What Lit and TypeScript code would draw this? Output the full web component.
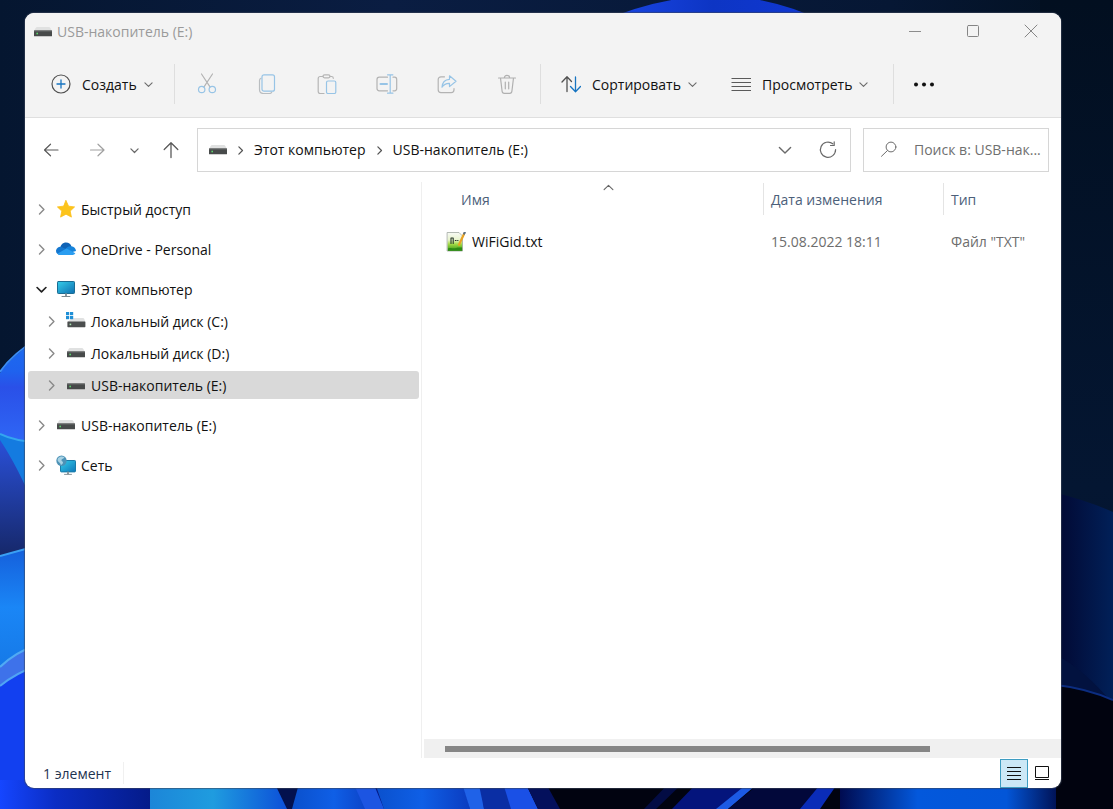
import { LitElement, html, css, svg } from "lit";
import { customElement, state } from "lit/decorators.js";
import { classMap } from "lit/directives/class-map.js";

const GREY = "#6a6a6a";

/* ---------- glyphs ---------- */

const chevron = (dir: "down" | "right" | "up", size: number, color: string, width = 1.2) => {
  const d = { down: "M1 3.2 5 7.2 9 3.2", right: "M3.2 1 7.2 5 3.2 9", up: "M1 7 5 3 9 7" }[dir];
  return html`<svg class="glyph" width=${size} height=${size} viewBox="0 0 10 10" fill="none" aria-hidden="true">
    <path d=${d} stroke=${color} stroke-width=${width} stroke-linecap="round" stroke-linejoin="round" />
  </svg>`;
};

const glyph = (content: unknown, w = 20, h = 20) => html`<svg
  class="glyph" width=${w} height=${h} viewBox="0 0 ${w} ${h}" fill="none"
  stroke-linecap="round" stroke-linejoin="round" aria-hidden="true">${content}</svg>`;

const driveShape = svg`
  <path d="M3 3h12q.8 0 1.200.8L18 7H0l1.800-3.200Q2.200 3 3 3z" fill="#e0e1e1"/>
  <rect x="0" y="6.500" width="18" height="5.800" rx=".6" fill="#474a4a"/>
  <rect x="0" y="6.500" width="18" height="1" fill="#686b6b"/>
  <rect x="2.400" y="8.700" width="1.600" height="1.600" fill="#5bd46c"/>`;

const icons = {
  drive: glyph(driveShape, 18, 16),
  driveC: glyph(svg`
    <path d="M8 6h9q.8 0 1.200.8L19.400 10H1.400L5 7z" fill="#e0e1e1"/>
    <rect x="0" y="0" width="3.200" height="3.200" fill="#1f8fd6"/><rect x="4" y="0" width="3.200" height="3.200" fill="#1f8fd6"/>
    <rect x="0" y="4" width="3.200" height="3.200" fill="#1f8fd6"/><rect x="4" y="4" width="3.200" height="3.200" fill="#1f8fd6"/>
    <rect x="1.400" y="9.400" width="18" height="5.800" rx=".6" fill="#4b4e4e"/>
    <rect x="3.600" y="11.600" width="1.600" height="1.600" fill="#a9e4b0"/>`, 20, 18),
  star: glyph(svg`<path d="M10 1.600l2.600 5.600 6 .7-4.400 4.200 1.200 6L10 15.200l-5.400 2.900 1.200-6L1.400 7.900l6-.7z"
    fill="#fcc41c" stroke="#fcbf18" stroke-width=".8"/>`),
  cloud: glyph(svg`
    <path d="M4.300 8.500C4.700 5.500 7 3.400 10 3.400c2.700 0 4.700 1.600 5.500 4l-6 5z" fill="#0f62b5"/>
    <path d="M4.200 16A4.100 4.100 0 1 1 5.400 8l8 3.500-2 4.500z" fill="#1477cf"/>
    <path d="M9 10.500c1.200-2.300 3.600-3.700 6.300-3.300 2.800.4 4.500 2.300 4.700 4.800L13 14z" fill="#1583db"/>
    <path d="M1.300 14.800 9.600 10c.6-.3 1.300-.3 1.900 0l7.900 4.300A3.700 3.700 0 0 1 16.600 16H4.200c-1.200 0-2.200-.4-2.900-1.200z" fill="#2a9df0"/>`),
  monitor: glyph(svg`
    <defs><linearGradient id="scr" x1="0" y1="0" x2="1" y2="1">
      <stop offset="0" stop-color="#35cdea"/><stop offset="1" stop-color="#0e6fb0"/></linearGradient></defs>
    <rect x="1.500" y="2.500" width="17" height="12" rx=".8" fill="url(#scr)" stroke="#1a6c92"/>
    <path d="M10 15.200v1.600" stroke="#8a969c" stroke-width="2"/><path d="M6 17.500h8" stroke="#7d898f"/>`),
  network: glyph(svg`
    <defs><linearGradient id="net" x1="0" y1="0" x2="1" y2="1">
      <stop offset="0" stop-color="#35cdea"/><stop offset="1" stop-color="#0e78ba"/></linearGradient></defs>
    <rect x="4.500" y="5.500" width="15" height="11.400" rx=".8" fill="url(#net)" stroke="#1a7ba8"/>
    <path d="M12 17.400v1.400" stroke="#8a969c" stroke-width="2"/><path d="M8.500 19.400h7" stroke="#8a969c"/>
    <circle cx="5.500" cy="5.800" r="5.200" fill="#4d92b6"/>
    <path d="M2 3.200c2-2.200 5-2.200 6.500-.8-1 1.600-2.600 1-3 2.400-.5 1.500 1.600 1.200 1.500 3-.1 1-1.200 1.700-2 2.400-.5-1.500-1-2.400-2.200-3.200S1.200 4.700 2 3.200z" fill="#a8d2e4"/>`),
  file: glyph(svg`
    <defs><linearGradient id="grn" x1="0" y1="0" x2="0" y2="1">
      <stop offset="0" stop-color="#f8faf6"/><stop offset=".4" stop-color="#e8f4cc"/><stop offset=".62" stop-color="#a6dc48"/><stop offset="1" stop-color="#2f9412"/></linearGradient></defs>
    <path d="M1.500.5h11.500l3.500 3.500v15H1.500z" fill="url(#grn)" stroke="#a2aaa2" stroke-width=".8"/>
    <path d="M2 16.500c3-1.500 5 .5 8-.5s4-.5 6.100-.5v3.200H2z" fill="#2d8b14"/>
    <path d="M5 6v5.500M7.200 6v5.500M5 6h2.200M9.300 8.500h.8M11.600 8.500h.4" stroke="#26352a" stroke-width="1.100"/>
    <path d="M18 2 13 12.800" stroke="#e8a224" stroke-width="2.200"/>
    <path d="M18.200 1.500l.5-.9" stroke="#5d7080" stroke-width="2.200"/>`),
  add: glyph(svg`<circle cx="10" cy="10" r="9" stroke="#505050" stroke-width="1.200"/>
    <path d="M10 6v8M6 10h8" stroke="#1674c1" stroke-width="1.300"/>`),
  cut: glyph(svg`<path d="M4.500 1 13 13.800M15.500 1 7 13.800" stroke="#b3b3b3" stroke-width="1.200"/>
    <circle cx="4.700" cy="16.500" r="3.200" stroke="#97c4e6" stroke-width="1.200"/>
    <circle cx="15.300" cy="16.500" r="3.200" stroke="#97c4e6" stroke-width="1.200"/>`, 20, 22),
  copy: glyph(svg`<path d="M4 4.200c-1 .4-1.500 1.200-1.500 2.200v9.200c0 2.400 1.400 3.900 3.800 3.900h6.200c1 0 1.800-.5 2.200-1.300" stroke="#b9bdc0" stroke-width="1.200"/>
    <rect x="5" y=".8" width="12.500" height="16.400" rx="2" stroke="#97c4e6" stroke-width="1.200"/>`),
  paste: glyph(svg`<path d="M6 2.500H3.200C2 2.500 1.200 3.300 1.200 4.500V17.500c0 1.200.8 2 2 2H7M13 2.500h1.500c1 0 1.800.8 1.800 1.800" stroke="#b5b5b5" stroke-width="1.200"/>
    <rect x="6" y=".8" width="7" height="3" rx="1.500" stroke="#b5b5b5" stroke-width="1.200"/>
    <rect x="9.500" y="7" width="9.300" height="12.500" rx="1.500" stroke="#97c4e6" stroke-width="1.200"/>`),
  rename: glyph(svg`<path d="M11.500 3.200H3.400C1.900 3.200 1 4 1 5.400v9.200c0 1.400.9 2.200 2.400 2.200h8.100M17 3.200h1.600c1.500 0 2.100.8 2.100 2.200v9.200c0 1.400-.6 2.200-2.100 2.200H17" stroke="#b3b3b3" stroke-width="1.200"/>
    <path d="M14.200 .8v18.400M11.500 .8h5.400M11.500 19.200h5.400" stroke="#97c4e6" stroke-width="1.200"/>
    <path d="M4.500 10h6.500" stroke="#97c4e6" stroke-width="2"/>`, 22, 20),
  share: glyph(svg`<path d="M7.500 2.800H4C2.300 2.800 1.200 3.900 1.200 5.600v10.200c0 1.700 1.100 2.800 2.800 2.800h10.200c1.700 0 2.800-1.100 2.800-2.800v-1.300" stroke="#b3b3b3" stroke-width="1.200"/>
    <path d="M12.500 1.800 19 7.300l-6.500 5.300V9.400c-3.500-.2-5.600 1-7.500 3.800.3-4.400 3-7.600 7.500-7.900z" stroke="#97c4e6" stroke-width="1.200"/>`),
  trash: glyph(svg`<path d="M1.500 4h17M3.500 4l1.600 13.300c.1 1.300.9 2 2.200 2h5.400c1.300 0 2.100-.7 2.200-2L16.500 4M7.300 4c0-1.600 1-2.700 2.700-2.700S12.700 2.400 12.700 4M8.300 8v6.800M11.700 8v6.800" stroke="#b0b0b0" stroke-width="1.200"/>`),
  sort: glyph(svg`<path d="M6 17.500V3M1 8l5-5.200L10.500 7.500" stroke="#505050" stroke-width="1.300"/>
    <path d="M14.500 3v14.500M9.500 12.500l5 5.200 5-5.200" stroke="#1674c1" stroke-width="1.300"/>`),
  lines: glyph(svg`<path d="M.5 4.500h19.500M.5 8.500h19.500M.5 12.500h19.500M.5 16.500h19.500" stroke="#5a5a5a" stroke-linecap="butt"/>`),
  dots: glyph(svg`<circle cx="2" cy="10.500" r="2" fill="#111"/><circle cx="10" cy="10.500" r="2" fill="#111"/><circle cx="18" cy="10.500" r="2" fill="#111"/>`),
  back: glyph(svg`<path d="M3.500 10H17M9.500 4.200 3.500 10l6 5.800" stroke="#5a5a5a" stroke-width="1.200"/>`),
  forward: glyph(svg`<path d="M3.500 10H17M11 4.200l6 5.800-6 5.800" stroke="#a0a0a0" stroke-width="1.200"/>`),
  up: glyph(svg`<path d="M10 17.500V3M3.200 9.500 10 2.700l6.800 6.800" stroke="#5a5a5a" stroke-width="1.300"/>`),
  refresh: glyph(svg`<path d="M14.800 3.800A7.600 7.600 0 1 0 17.600 9.600" stroke="#6a6a6a" stroke-width="1.200"/>
    <path d="M16.200 1.800v3.700h-3.700" stroke="#6a6a6a" stroke-width="1.200"/>`),
  search: glyph(svg`<circle cx="12" cy="7" r="4.900" stroke="#6c6c6c"/><path d="M8.400 10.600 2.500 16.300" stroke="#6c6c6c"/>`),
  min: glyph(svg`<path d="M1 7.500h12" stroke="#8c8c8c" stroke-linecap="butt"/>`, 14, 16),
  max: glyph(svg`<rect x="1.500" y="1.500" width="11" height="11" rx="1" stroke="#858585"/>`, 14, 16),
  close: glyph(svg`<path d="M1 1l12 12M13 1 1 13" stroke="#858585"/>`, 14, 16),
  detailsView: glyph(svg`<path d="M0 2.500h14M0 6.500h14M0 10.500h14M0 14.500h14" stroke="#111" stroke-linecap="butt"/>`, 14, 16),
  tilesView: glyph(svg`<path d="M.5.500h13v11H.5zM0 13.500h14" stroke="#111" stroke-linecap="butt" stroke-linejoin="miter"/>`, 14, 14),
};

type IconName = keyof typeof icons;

/* ---------- desktop background ---------- */

@customElement("desktop-wallpaper")
class DesktopWallpaper extends LitElement {
  static styles = css`
    :host { display: block; position: absolute; inset: 0; overflow: hidden; }
    .art { display: block; width: 100%; height: 100%; }
  `;

  render() {
    return html`<svg class="art" viewBox="0 0 1113 809" preserveAspectRatio="none" aria-hidden="true">
      <defs>
        <linearGradient id="night" x1="0" y1="0" x2="1" y2="0">
          <stop offset="0" stop-color="#051630"/><stop offset=".35" stop-color="#0a1d42"/>
          <stop offset=".8" stop-color="#061734"/><stop offset="1" stop-color="#02101f"/>
        </linearGradient>
        <linearGradient id="edge" x1="0" y1="0" x2="0" y2="1">
          <stop offset="0" stop-color="#020f20"/><stop offset=".6" stop-color="#041632"/><stop offset="1" stop-color="#031129"/>
        </linearGradient>
        <linearGradient id="top" x1="0" y1="0" x2="1" y2="0">
          <stop offset="0" stop-color="#1b48e8"/><stop offset=".5" stop-color="#0d35c4"/><stop offset="1" stop-color="#1038d4"/>
        </linearGradient>
        <linearGradient id="p1" x1="0" y1="340" x2="0" y2="445" gradientUnits="userSpaceOnUse">
          <stop offset="0" stop-color="#1b6cf0"/><stop offset=".3" stop-color="#1f62ee"/><stop offset=".45" stop-color="#2a50e8"/><stop offset="1" stop-color="#2f68f6"/>
        </linearGradient>
        <linearGradient id="p2" x1="0" y1="440" x2="0" y2="555" gradientUnits="userSpaceOnUse">
          <stop offset="0" stop-color="#2a50d8"/><stop offset="1" stop-color="#16286a"/>
        </linearGradient>
        <linearGradient id="p3" x1="0" y1="550" x2="0" y2="665" gradientUnits="userSpaceOnUse">
          <stop offset="0" stop-color="#1560dc"/><stop offset=".5" stop-color="#1a86f6"/><stop offset="1" stop-color="#167ae8"/>
        </linearGradient>
        <linearGradient id="floor" x1="0" y1="0" x2="1" y2="0">
          <stop offset="0" stop-color="#1546ff"/><stop offset=".05" stop-color="#0b2dc4"/>
          <stop offset=".14" stop-color="#041a86"/><stop offset="1" stop-color="#041a86"/>
        </linearGradient>
        <linearGradient id="cy" x1="0" y1="0" x2="1" y2="0">
          <stop offset="0" stop-color="#1c86d8"/><stop offset=".45" stop-color="#1f9cdf"/><stop offset="1" stop-color="#0b4cd8"/>
        </linearGradient>
        <linearGradient id="r1" x1="0" y1="0" x2="1" y2="0">
          <stop offset="0" stop-color="#020832"/><stop offset="1" stop-color="#012058"/>
        </linearGradient>
        <linearGradient id="glow" x1="0" y1="0" x2="1" y2="0">
          <stop offset="0" stop-color="#000b50"/><stop offset=".35" stop-color="#0358dc"/>
          <stop offset=".75" stop-color="#0356d8"/><stop offset="1" stop-color="#000b48"/>
        </linearGradient>
        <linearGradient id="s1" x1="0" y1="0" x2="1" y2="0">
          <stop offset="0" stop-color="#0a50cc"/><stop offset=".5" stop-color="#0f5fe6"/><stop offset="1" stop-color="#0b3cc0"/>
        </linearGradient>
      </defs>

      <rect width="1113" height="809" fill="url(#night)"/>
      <rect x="1040" width="73" height="809" fill="url(#edge)"/>
      <path d="M600 22Q720-30 825 22z" fill="url(#top)"/>

      <path d="M0 373Q12 355 40 338V809H0z" fill="url(#p1)"/>
      <path d="M0 372Q12 354 40 337" stroke="#3b8cf5" stroke-width="2" fill="none"/>
      <path d="M0 434Q14 441 40 443V600H0z" fill="url(#p2)"/>
      <path d="M0 434Q14 441 40 443V520Q20 470 0 440z" fill="#147be0"/>
      <path d="M0 434Q14 441 40 443" stroke="#34a6ef" stroke-width="2" fill="none"/>
      <path d="M0 556 40 545V809H0z" fill="url(#p3)"/>
      <path d="M0 556 40 545" stroke="#3aa0f4" stroke-width="2"/>
      <path d="M0 667Q14 653 40 643V809H0z" fill="#3e72ea"/>
      <path d="M0 667Q14 653 40 643" stroke="#50aaf4" stroke-width="2" fill="none"/>
      <path d="M0 686Q14 674 40 664V809H0z" fill="#1240f0"/>
      <path d="M0 686Q14 674 40 664" stroke="#50a4f4" stroke-width="2" fill="none"/>

      <rect y="780" width="1113" height="29" fill="url(#floor)"/>
      <rect x="150" y="780" width="140" height="29" fill="url(#cy)"/>
      <path d="M273 780h30v29h-16z" fill="#03114e"/>
      <path d="M300 780h60l16 29h-84z" fill="url(#s1)"/>
      <path d="M352 780h20l12 29h-19z" fill="#1c55e2"/>
      <path d="M374 780h88l8 29h-86z" fill="url(#s1)"/>
      <path d="M461 780h20l3 29h-14z" fill="#1f62e8"/>
      <path d="M478 780h30l5 29h-29z" fill="#0a2ea4"/>
      <path d="M502 780h22l15 29h-28z" fill="#1a50e6"/>
      <path d="M524 780h589v29H538z" fill="#010310"/>
      <path d="M524 780h20l16 29h-22z" fill="#04105c"/>
      <path d="M672 780h14l-30 29h-12z" fill="#030c44"/>
      <path d="M700 780h56l-38 29h-46z" fill="#04147c"/>
      <path d="M752 780h10l-34 29h-12z" fill="#1c5ae4"/>
      <path d="M764 780h74l-20 29h-90z" fill="#02083a"/>
      <path d="M824 780h16l-20 29h-20z" fill="#0a2cb8"/>
      <rect x="840" y="780" width="222" height="29" fill="url(#glow)"/>

      <path d="M1056 493Q1086 500 1113 512V809h-57z" fill="url(#r1)"/>
      <path d="M1056 655Q1085 670 1113 704V809h-57z" fill="#02123f"/>
      <path d="M1056 685Q1085 688 1113 700V809h-57z" fill="#01030f"/>
      <path d="M1056 685Q1085 688 1113 700" stroke="#0c2d80" stroke-width="2" fill="none"/>
    </svg>`;
  }
}

/* ---------- application ---------- */

interface TreeNode {
  id: string;
  label: string;
  icon: IconName;
  open?: boolean;
  children?: TreeNode[];
}

const TREE: TreeNode[] = [
  { id: "quick", label: "Быстрый доступ", icon: "star" },
  { id: "onedrive", label: "OneDrive - Personal", icon: "cloud" },
  {
    id: "pc", label: "Этот компьютер", icon: "monitor", open: true,
    children: [
      { id: "c", label: "Локальный диск (C:)", icon: "driveC" },
      { id: "d", label: "Локальный диск (D:)", icon: "drive" },
      { id: "e", label: "USB-накопитель (E:)", icon: "drive" },
    ],
  },
  { id: "usb", label: "USB-накопитель (E:)", icon: "drive" },
  { id: "net", label: "Сеть", icon: "network" },
];

const ACTIONS: { icon: IconName; label: string }[] = [
  { icon: "cut", label: "Вырезать" },
  { icon: "copy", label: "Копировать" },
  { icon: "paste", label: "Вставить" },
  { icon: "rename", label: "Переименовать" },
  { icon: "share", label: "Поделиться" },
  { icon: "trash", label: "Удалить" },
];

const FILES = [{ name: "WiFiGid.txt", date: "15.08.2022 18:11", type: 'Файл "TXT"' }];

@customElement("app-root")
class AppRoot extends LitElement {
  static styles = css`
    :host {
      display: block;
      position: relative;
      font: 14px/20px "Open Sans", "Noto Sans", sans-serif;
      color: #111;
    }
    *, *::before { box-sizing: border-box; }
    button, input { font: inherit; color: inherit; background: none; border: 0; padding: 0; margin: 0; }
    ul { list-style: none; margin: 0; padding: 0; }
    .glyph { display: block; flex: none; }
    .label { padding-top: 2px; }

    .desktop { position: relative; display: flex; height: 100vh; padding: 13px 52px 21px 25px; }
    .window {
      flex: 1; min-width: 0; display: flex; flex-direction: column;
      background: #fff; border-radius: 9px; overflow: hidden;
      box-shadow: 0 0 1px 1px rgba(60, 70, 90, .6);
    }

    .titlebar { display: flex; align-items: center; height: 37px; padding: 0 1px 0 9px; background: #f3f3f3; color: #9a9a9a; }
    .title { flex: 1; margin: 0 0 0 5px; font-size: 14px; font-weight: 400; }
    .control { display: grid; place-items: center; width: 58px; height: 37px; }

    .toolbar { display: flex; align-items: center; height: 68px; padding: 0 0 0 26px; background: #f3f3f3; border-bottom: 1px solid #dfdfdf; }
    .command { display: flex; align-items: center; gap: 11px; height: 40px; text-align: left; white-space: nowrap; }
    .command .tail { margin-left: -4px; padding-top: 1px; }
    .create { width: 123px; }
    .sort { width: 170px; padding-left: 20px; }
    .view { width: 182px; padding-left: 20px; }
    .rule { width: 1px; height: 40px; background: #dedede; }
    .actions { display: flex; padding: 0 3px 0 2px; }
    .action { display: grid; place-items: center; width: 60px; height: 40px; }

    .navbar { display: flex; align-items: center; height: 64px; padding: 0 12px 0 3px; }
    .nav { display: grid; place-items: center; width: 46px; height: 40px; }
    .nav.recent { width: 28px; }
    .nav.up { width: 45px; }
    .address { flex: 1; min-width: 0; display: flex; align-items: center; height: 44px; margin: 0 12px 0 4px; padding: 0 11px; border: 1px solid #d6d6d6; }
    .crumbs { flex: 1; display: flex; align-items: center; gap: 9px; }
    .addr-btn { display: grid; place-items: center; width: 22px; height: 40px; margin-left: 21px; }
    .search { display: flex; align-items: center; gap: 15px; width: 186px; height: 44px; padding: 0 5px 0 15px; border: 1px solid #d6d6d6; }
    .search-input { flex: 1; min-width: 0; outline: none; text-overflow: ellipsis; }
    .search-input::placeholder { color: #6f6f6f; opacity: 1; }

    .body { flex: 1; min-height: 0; display: flex; }
    .tree { width: 397px; flex: none; padding: 13px 2px 0 3px; border-right: 1px solid #efefef; }
    .branch { display: flex; flex-direction: column; gap: 12px; }
    .leafs { display: flex; flex-direction: column; gap: 4px; margin-top: 4px; }
    .node { display: flex; align-items: center; gap: 5px; width: 100%; height: 28px; padding-left: 8px; border-radius: 3px; text-align: left; }
    .leafs .node { padding-left: 18px; }
    .node.selected { background: #d9d9d9; }
    .node-icon { display: grid; place-items: center; width: 20px; margin-left: 4px; }

    .files { flex: 1; min-width: 0; display: flex; flex-direction: column; padding-left: 2px; }
    .list { flex: 1; min-height: 0; overflow: hidden; }
    .table { width: 100%; border-collapse: collapse; table-layout: fixed; }
    .table th { position: relative; height: 35px; padding: 0 0 0 7px; font-weight: 400; color: #4c607a; text-align: left; }
    .table th.name { width: 340px; padding-left: 37px; }
    .table th.date { width: 180px; }
    .table th + th::before { content: ""; position: absolute; left: -1px; top: 1px; bottom: 2px; width: 1px; background: #e4e4e4; }
    .sort-mark { position: absolute; top: 0; left: 179px; }
    .table td { height: 48px; padding: 2px 0 0 7px; color: #6d6d6d; }
    .table td.name { padding-left: 22px; }
    .file { display: flex; align-items: center; gap: 6px; color: #111; }

    .scroll { height: 19px; padding: 7px 21px 0; background: #f0f0f0; }
    .thumb { width: 81.5%; height: 6px; background: #868686; }

    .status { display: flex; align-items: center; height: 30px; padding: 0 5px 0 18px; color: #1e3350; }
    .count { padding: 2px 12px 0 0; border-right: 1px solid #f0f0f0; }
    .modes { display: flex; margin-left: auto; }
    .mode { display: grid; place-items: center; width: 28px; height: 29px; border: 1px solid transparent; }
    .mode.on { background: #cce8f6; border-color: #3f9dc2; }
  `;

  @state() private selected = "e";
  @state() private mode = "details";

  private renderNode(node: TreeNode): unknown {
    return html`<li>
      <button
        class=${classMap({ node: true, selected: this.selected === node.id })}
        @click=${() => (this.selected = node.id)}
      >
        ${node.open ? chevron("down", 11, "#222", 1.5) : chevron("right", 11, "#8a8a8a", 1.3)}
        <span class="node-icon">${icons[node.icon]}</span>
        <span class="label">${node.label}</span>
      </button>
      ${node.children ? html`<ul class="leafs">${node.children.map((c) => this.renderNode(c))}</ul>` : null}
    </li>`;
  }

  render() {
    return html`
      <desktop-wallpaper></desktop-wallpaper>
      <div class="desktop">
        <main class="window">
          <header class="titlebar">
            ${icons.drive}
            <h1 class="title">USB-накопитель (E:)</h1>
            <button class="control" aria-label="Свернуть">${icons.min}</button>
            <button class="control" aria-label="Развернуть">${icons.max}</button>
            <button class="control" aria-label="Закрыть">${icons.close}</button>
          </header>

          <div class="toolbar" role="toolbar">
            <button class="command create">${icons.add}<span class="label">Создать</span><span class="tail">${chevron("down", 9, GREY)}</span></button>
            <span class="rule"></span>
            <div class="actions">
              ${ACTIONS.map((a) => html`<button class="action" aria-label=${a.label}>${icons[a.icon]}</button>`)}
            </div>
            <span class="rule"></span>
            <button class="command sort">${icons.sort}<span class="label">Сортировать</span><span class="tail">${chevron("down", 9, GREY)}</span></button>
            <button class="command view">${icons.lines}<span class="label">Просмотреть</span><span class="tail">${chevron("down", 9, GREY)}</span></button>
            <span class="rule"></span>
            <button class="action" aria-label="Ещё">${icons.dots}</button>
          </div>

          <nav class="navbar">
            <button class="nav" aria-label="Назад">${icons.back}</button>
            <button class="nav" aria-label="Вперёд">${icons.forward}</button>
            <button class="nav recent" aria-label="Последние">${chevron("down", 9, GREY, 1.4)}</button>
            <button class="nav up" aria-label="Вверх">${icons.up}</button>
            <div class="address">
              <div class="crumbs">
                ${icons.drive} ${chevron("right", 9, "#555", 1.4)}
                <button>Этот компьютер</button>
                ${chevron("right", 9, "#555", 1.4)}
                <button>USB-накопитель (E:)</button>
              </div>
              <button class="addr-btn" aria-label="Журнал">${chevron("down", 14, GREY, 1)}</button>
              <button class="addr-btn" aria-label="Обновить">${icons.refresh}</button>
            </div>
            <label class="search">
              ${icons.search}
              <input class="search-input" type="text" aria-label="Поиск" placeholder="Поиск в: USB-нак..." />
            </label>
          </nav>

          <div class="body">
            <aside class="tree"><ul class="branch">${TREE.map((n) => this.renderNode(n))}</ul></aside>
            <section class="files">
              <div class="list">
                <table class="table">
                  <thead>
                    <tr>
                      <th class="name">Имя<span class="sort-mark">${chevron("up", 11, "#666", 1)}</span></th>
                      <th class="date">Дата изменения</th>
                      <th>Тип</th>
                    </tr>
                  </thead>
                  <tbody>
                    ${FILES.map((f) => html`<tr>
                      <td class="name"><span class="file">${icons.file}<span>${f.name}</span></span></td>
                      <td>${f.date}</td>
                      <td>${f.type}</td>
                    </tr>`)}
                  </tbody>
                </table>
              </div>
              <div class="scroll"><div class="thumb"></div></div>
            </section>
          </div>

          <footer class="status">
            <span class="count">1 элемент</span>
            <div class="modes">
              <button class=${classMap({ mode: true, on: this.mode === "details" })} aria-label="Таблица"
                @click=${() => (this.mode = "details")}>${icons.detailsView}</button>
              <button class=${classMap({ mode: true, on: this.mode === "tiles" })} aria-label="Эскизы"
                @click=${() => (this.mode = "tiles")}>${icons.tilesView}</button>
            </div>
          </footer>
        </main>
      </div>
    `;
  }
}
